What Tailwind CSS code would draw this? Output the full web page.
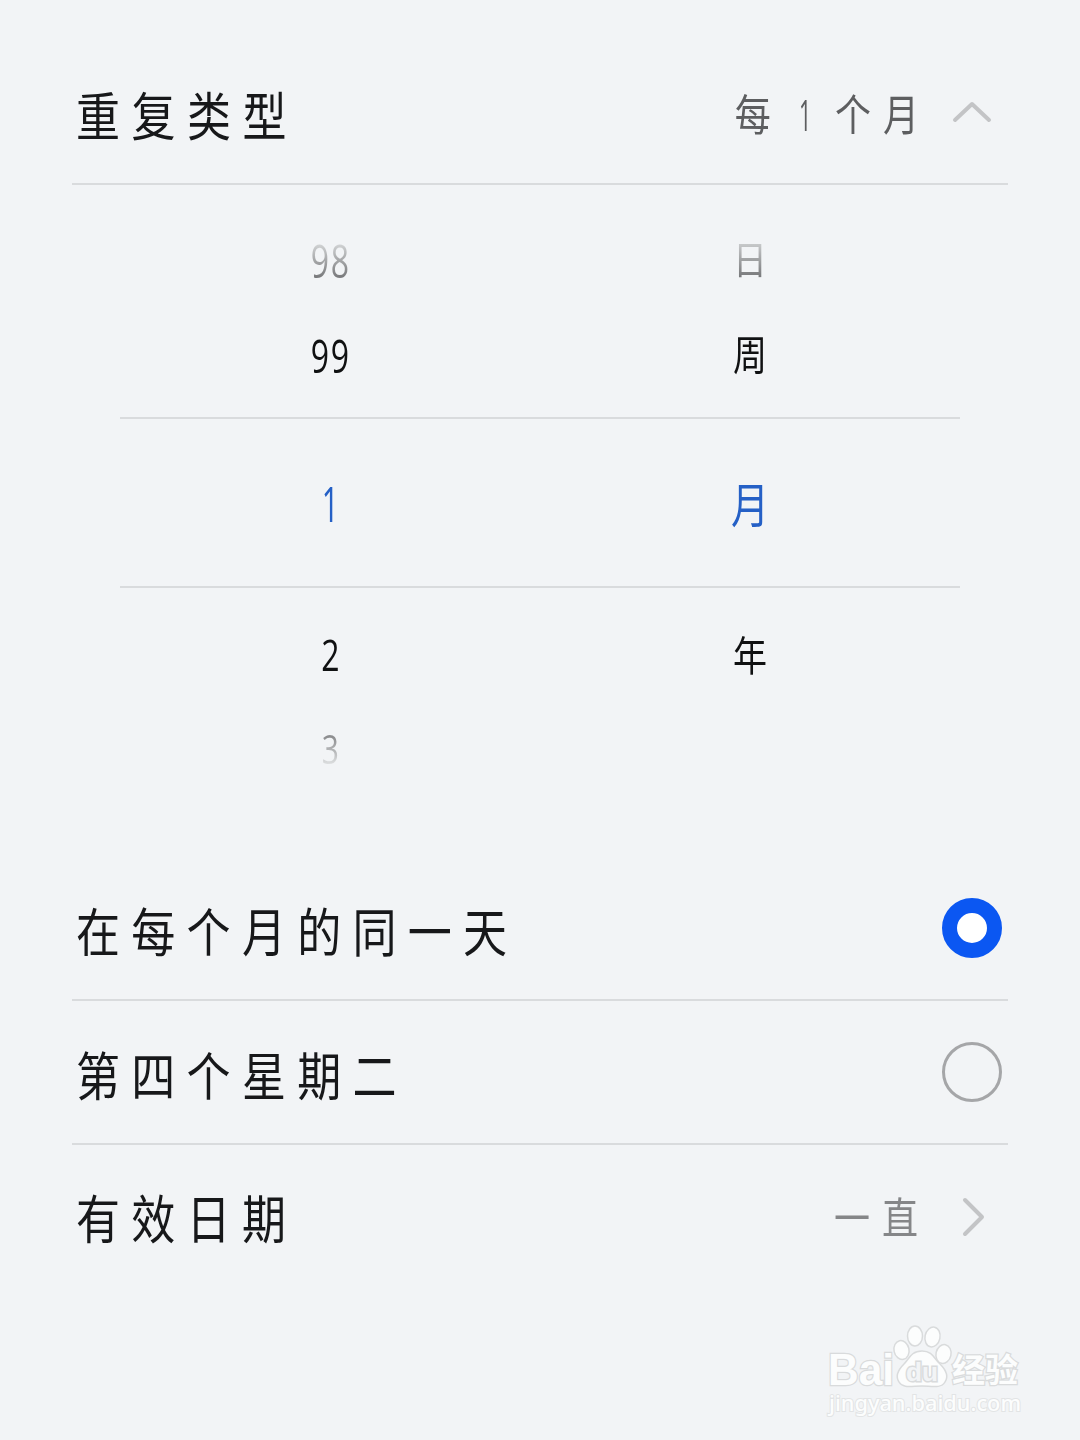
<!DOCTYPE html>
<html lang="zh-CN">
  <head>
    <meta charset="UTF-8" />
    <meta name="viewport" content="width=device-width, initial-scale=1.0" />
    <title>重复类型</title>
    <script src="https://cdn.jsdelivr.net/npm/@tailwindcss/browser@4"></script>
  </head>

  <body
    class="bg-[#f2f4f6] text-[#17181a] h-[1440px] overflow-hidden flex flex-col px-[72px] pt-10 font-normal font-['Noto_Sans_CJK_SC',sans-serif]"
  >
    <!-- Repeat type -->
    <header
      class="h-[145px] shrink-0 flex items-center justify-between border-b-2 border-[#d9dbdd]"
    >
      <h1
        class="origin-left scale-y-118 pl-1 pt-0.5 text-[44px] leading-none tracking-[11.5px] whitespace-nowrap"
      >重复类型</h1>
      <div class="flex items-center pr-4">
        <span
          class="scale-y-120 pt-[3px] mr-[21px] text-[36px] leading-none tracking-[12px] [word-spacing:-10px] text-[#5d5e60] whitespace-nowrap"
        >每 <span class="inline-block w-6 mr-2 text-center tracking-normal font-['Open_Sans',sans-serif]"><span class="inline-block scale-x-60">1</span></span> 个月</span>
        <svg class="w-10 h-6" viewBox="0 0 40 24" fill="none" stroke="#c3c4c6" stroke-width="4" stroke-linecap="round" stroke-linejoin="round">
          <path d="M3 20 L20 4 L37 20" />
        </svg>
      </div>
    </header>

    <!-- Wheel picker -->
    <section
      class="h-[671px] shrink-0 px-12 pt-[25px] text-center text-[34px] leading-none text-[#101112]"
    >
      <div class="grid grid-cols-2 h-[95px] items-center">
        <div><span class="inline-block pt-1 pl-0.5 scale-x-80 scale-y-115 text-[40px] tracking-[2px] font-['Open_Sans',sans-serif] bg-linear-to-b from-[#d5d7d8] from-20% to-[#77787a] to-90% bg-clip-text text-transparent">98</span></div>
        <div><span class="inline-block scale-y-115 bg-linear-to-b from-[#d5d7d8] to-[#77787a] bg-clip-text text-transparent">日</span></div>
      </div>
      <div class="grid grid-cols-2 h-[95px] items-center">
        <div><span class="inline-block pt-1 pl-0.5 scale-x-80 scale-y-115 text-[40px] tracking-[2px] font-['Open_Sans',sans-serif]">99</span></div>
        <div><span class="inline-block scale-y-120">周</span></div>
      </div>
      <div
        class="grid grid-cols-2 h-[171px] mt-[17px] items-center border-y-2 border-[#d9dbdd] text-[#2560c6]"
      >
        <div><span class="inline-block scale-x-60 text-[50px] font-['Open_Sans',sans-serif]">1</span></div>
        <div><span class="inline-block scale-y-125 text-[38px]">月</span></div>
      </div>
      <div class="grid grid-cols-2 h-[95px] mt-[18px] items-center">
        <div><span class="inline-block scale-x-80 scale-y-110 text-[40px] font-['Open_Sans',sans-serif]">2</span></div>
        <div><span class="inline-block scale-y-120">年</span></div>
      </div>
      <div class="grid grid-cols-2 h-[95px] items-center">
        <div><span class="inline-block scale-x-75 text-[40px] font-['Open_Sans',sans-serif] bg-linear-to-b from-[#8d8e90] from-20% to-[#e0e2e3] to-90% bg-clip-text text-transparent">3</span></div>
      </div>
    </section>

    <!-- Options -->
    <ul class="shrink-0 text-[44px] leading-none tracking-[11.3px] whitespace-nowrap">
      <li class="h-[145px] flex items-center justify-between pl-1 pr-[6px] border-b-2 border-[#d9dbdd]">
        <span class="pt-0.5 scale-y-118">在每个月的同一天</span>
        <span class="size-[60px] rounded-full border-[15px] border-[#0b57f2] bg-white"></span>
      </li>
      <li class="h-36 flex items-center justify-between pl-1 pr-[6px] border-b-2 border-[#d9dbdd]">
        <span class="pt-0.5 scale-y-118">第四个星期二</span>
        <span class="size-[60px] rounded-full border-3 border-[#a5a6a8]"></span>
      </li>
      <li class="h-36 flex items-center justify-between pl-1 pr-4">
        <span class="scale-y-118">有效日期</span>
        <div class="flex items-center">
          <span class="mr-[22px] pb-1 scale-y-120 text-[36px] tracking-[12px] text-[#858688]">一直</span>
          <svg class="w-10 h-10" viewBox="0 0 40 40" fill="none" stroke="#c3c4c6" stroke-width="4" stroke-linecap="round" stroke-linejoin="round">
            <path d="M13 3 L30 20 L13 37" />
          </svg>
        </div>
      </li>
    </ul>

    <!-- Watermark -->
    <footer class="mt-8 -mr-4 w-[200px] self-end">
      <svg class="w-[200px] h-[104px] overflow-visible" viewBox="0 0 200 104" fill="#fcfdfd" stroke="#d9dbdc" stroke-width="1.5">
        <g>
          <ellipse cx="77.5" cy="29" rx="7.5" ry="9.5" transform="rotate(-12 77.5 29)" />
          <ellipse cx="91" cy="15" rx="7.5" ry="10" />
          <ellipse cx="108.5" cy="16" rx="7.5" ry="10" transform="rotate(12 108.5 16)" />
          <ellipse cx="119.5" cy="33" rx="7.5" ry="9.5" transform="rotate(12 119.5 33)" />
          <path d="M98 30 C87 30 85 38 80 43 C74 49 71 55 75 61 C79 68 88 65 98 65 C107 65 117 68 121 61 C125 55 122 49 116 43 C110 38 109 30 98 30 Z" />
        </g>
        <g class="font-['Liberation_Sans',sans-serif] font-bold" paint-order="stroke" stroke-width="2.5">
          <text x="4" y="64" font-size="45" textLength="66" lengthAdjust="spacingAndGlyphs">Bai</text>
          <text x="82" y="60" font-size="26" textLength="32" lengthAdjust="spacingAndGlyphs" fill="#f2f4f6" stroke-width="3">du</text>
          <text class="font-['Noto_Sans_CJK_SC',sans-serif]" x="128" y="61" font-size="33" textLength="66" lengthAdjust="spacingAndGlyphs">经验</text>
        </g>
        <text class="font-['Noto_Sans',sans-serif] font-medium" x="5" y="90" font-size="22" textLength="192" lengthAdjust="spacingAndGlyphs" paint-order="stroke" stroke="#e2e4e5" stroke-width="2">jingyan.baidu.com</text>
      </svg>
    </footer>
  </body>
</html>
